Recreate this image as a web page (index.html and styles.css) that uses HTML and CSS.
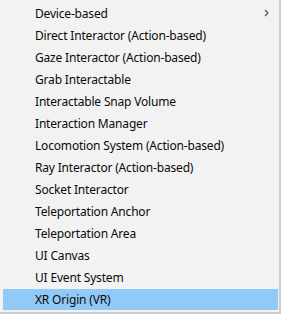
FILE: index.html
```html
<!DOCTYPE html>
<html lang="en">

<head>
    <meta charset="UTF-8">
    <meta name="viewport" content="width=device-width, initial-scale=1.0">
    <title>Menu</title>

    <link rel="stylesheet" href="styles.css">
</head>

<body>
    <div class="menu">
        <div class="menu-item">
            <span>Device-based</span>
            <svg class="chevron" width="5" height="8" viewBox="0 0 5 8">
                <path d="M1 1 L4 4 L1 7" fill="none" stroke="#4a4a4a" stroke-width="1.1" />
            </svg>
        </div>
        <div class="menu-item">Direct Interactor (Action-based)</div>
        <div class="menu-item">Gaze Interactor (Action-based)</div>
        <div class="menu-item">Grab Interactable</div>
        <div class="menu-item">Interactable Snap Volume</div>
        <div class="menu-item">Interaction Manager</div>
        <div class="menu-item">Locomotion System (Action-based)</div>
        <div class="menu-item">Ray Interactor (Action-based)</div>
        <div class="menu-item">Socket Interactor</div>
        <div class="menu-item">Teleportation Anchor</div>
        <div class="menu-item">Teleportation Area</div>
        <div class="menu-item">UI Canvas</div>
        <div class="menu-item">UI Event System</div>
        <div class="menu-item active">XR Origin (VR)</div>
    </div>
</body>

</html>
```

FILE: styles.css
```css
* {
    margin: 0;
    padding: 0;
    box-sizing: border-box;
}

body {
    background-color: #f0f0f0;
    font-family: "Noto Sans", "Noto Sans CJK KR", sans-serif;
    font-size: 12px;
    letter-spacing: -0.18px;
    color: #0a0a0a;
}

.menu {
    width: 281px;
    height: 314px;
    background-color: #f2f2f2;
    border-right: 2px solid #cccccc;
    border-bottom: 2px solid #cccccc;
    padding: 2px 1px 2px 3px;
}

.menu-item {
    height: 22px;
    display: flex;
    align-items: center;
    justify-content: space-between;
    padding-left: 32px;
    padding-right: 9px;
    white-space: nowrap;
}

.menu-item.active {
    background-color: #91c9f7;
    margin-top: 1px;
    height: 21px;
}

.chevron {
    display: block;
}
```
